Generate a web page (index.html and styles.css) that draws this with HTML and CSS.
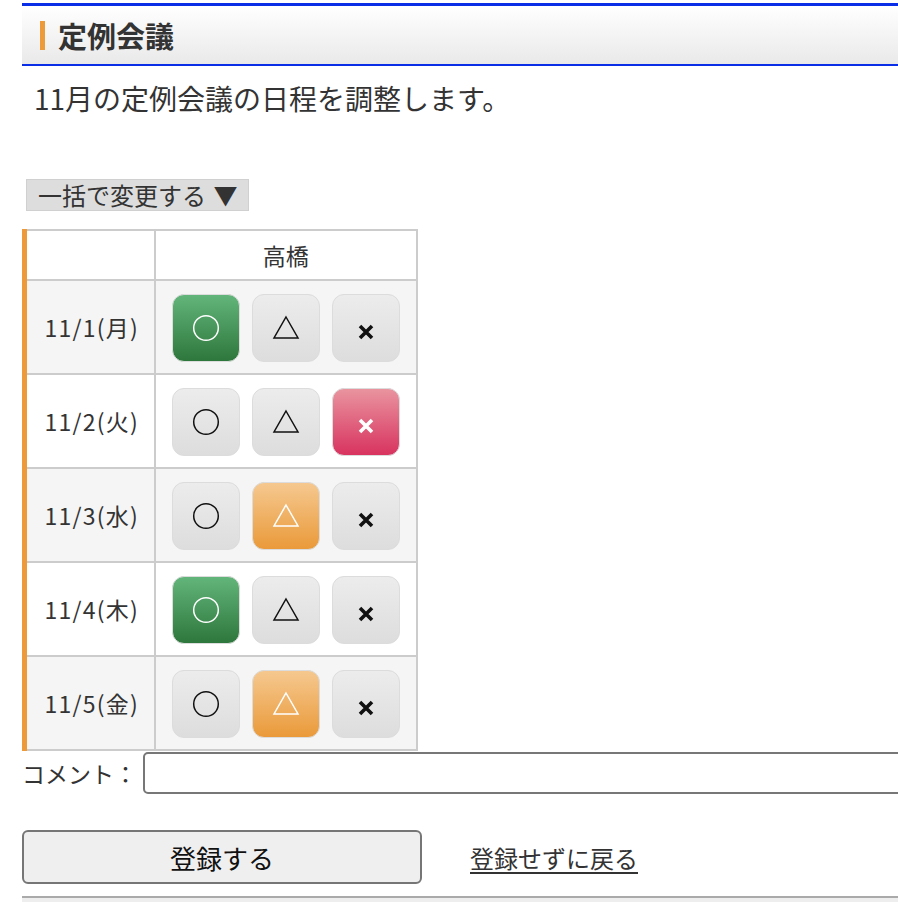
FILE: index.html
```html
<!DOCTYPE html>
<html lang="ja">
<head>
<meta charset="utf-8">
<title>定例会議</title>
<link rel="stylesheet" href="styles.css">
</head>
<body>
<div class="page">
  <h1 class="title"><span class="title-mark"></span>定例会議</h1>
  <p class="desc">11月の定例会議の日程を調整します。</p>
  <div class="bulk-row"><button class="bulk">一括で変更する <span class="caret">▼</span></button></div>
  <table class="sched">
    <colgroup><col class="col-date"><col class="col-name"></colgroup>
    <tr class="head">
      <th class="date"></th>
      <th class="name">高橋</th>
    </tr>
    <tr class="alt">
      <td class="date">11/1(月)</td>
      <td class="choices">
        <span class="opt on-ok"><svg viewBox="0 0 30 30"><circle cx="15" cy="15" r="12.3"/></svg></span><span class="opt"><svg viewBox="0 0 30 30"><path d="M15 4 L27 25 L3 25 Z"/></svg></span><span class="opt"><svg class="x" viewBox="0 0 30 30"><path d="M9 13 L21 25 M21 13 L9 25"/></svg></span>
      </td>
    </tr>
    <tr>
      <td class="date">11/2(火)</td>
      <td class="choices">
        <span class="opt"><svg viewBox="0 0 30 30"><circle cx="15" cy="15" r="12.3"/></svg></span><span class="opt"><svg viewBox="0 0 30 30"><path d="M15 4 L27 25 L3 25 Z"/></svg></span><span class="opt on-ng"><svg class="x" viewBox="0 0 30 30"><path d="M9 13 L21 25 M21 13 L9 25"/></svg></span>
      </td>
    </tr>
    <tr class="alt">
      <td class="date">11/3(水)</td>
      <td class="choices">
        <span class="opt"><svg viewBox="0 0 30 30"><circle cx="15" cy="15" r="12.3"/></svg></span><span class="opt on-maybe"><svg viewBox="0 0 30 30"><path d="M15 4 L27 25 L3 25 Z"/></svg></span><span class="opt"><svg class="x" viewBox="0 0 30 30"><path d="M9 13 L21 25 M21 13 L9 25"/></svg></span>
      </td>
    </tr>
    <tr>
      <td class="date">11/4(木)</td>
      <td class="choices">
        <span class="opt on-ok"><svg viewBox="0 0 30 30"><circle cx="15" cy="15" r="12.3"/></svg></span><span class="opt"><svg viewBox="0 0 30 30"><path d="M15 4 L27 25 L3 25 Z"/></svg></span><span class="opt"><svg class="x" viewBox="0 0 30 30"><path d="M9 13 L21 25 M21 13 L9 25"/></svg></span>
      </td>
    </tr>
    <tr class="alt">
      <td class="date">11/5(金)</td>
      <td class="choices">
        <span class="opt"><svg viewBox="0 0 30 30"><circle cx="15" cy="15" r="12.3"/></svg></span><span class="opt on-maybe"><svg viewBox="0 0 30 30"><path d="M15 4 L27 25 L3 25 Z"/></svg></span><span class="opt"><svg class="x" viewBox="0 0 30 30"><path d="M9 13 L21 25 M21 13 L9 25"/></svg></span>
      </td>
    </tr>
  </table>
  <div class="comment-row">
    <label class="comment-label" for="c">コメント：</label>
    <input class="comment-input" id="c" type="text">
  </div>
  <div class="actions">
    <button class="submit">登録する</button>
    <a class="back" href="#">登録せずに戻る</a>
  </div>
  <div class="footer-line"></div>
</div>
</body>
</html>
```

FILE: styles.css
```css
html, body {
  margin: 0;
  padding: 0;
  overflow: hidden;
  background: #fff;
}
body {
  font-family: "Noto Sans CJK JP", "Noto Sans", sans-serif;
  color: #333;
}
.page {
  padding: 3px 0 0 22px;
  width: 900px;
}
.title {
  margin: 0;
  height: 58px;
  border-top: 3px solid #0a2de6;
  border-bottom: 2px solid #0a2de6;
  background: linear-gradient(#ffffff, #e9e9e9);
  display: flex;
  align-items: center;
  font-size: 29px;
  font-weight: bold;
  color: #333;
  padding-left: 18px;
  line-height: 1;
}
.title-mark {
  display: inline-block;
  width: 5px;
  height: 29px;
  background: #ec9a3a;
  margin-right: 13px;
  margin-top: 1px;
}
.desc {
  margin: 0;
  padding: 13px 0 0 12px;
  font-size: 28px;
  line-height: 38px;
  height: 100px;
  color: #333;
}
.bulk-row {
  padding-left: 4px;
  height: 50px;
}
.bulk {
  font-family: inherit;
  font-size: 24px;
  line-height: 28px;
  height: 32px;
  padding: 0 11px 0 11px;
  background: #ddd;
  border: 1px solid #d0d0d0;
  color: #333;
  border-radius: 0;
  margin: 0;
}
.caret {
  margin-left: 2px;
}
.sched {
  border-collapse: collapse;
  border-left: 5px solid #ec9a3a;
  table-layout: fixed;
  width: 396px;
}
.col-date {
  width: 130px;
}
.sched th, .sched td {
  border: 2px solid #ccc;
  padding: 0;
  font-weight: normal;
  color: #333;
}
.sched tr td:first-child, .sched tr th:first-child {
  border-left: none;
}
.head th {
  height: 48px;
  font-size: 23px;
  background: #fff;
}
.date {
  font-size: 23px;
  letter-spacing: 1.2px;
  text-align: center;
  white-space: nowrap;
  padding-left: 3px !important;
}
.sched td {
  height: 92px;
}
.alt td {
  background: #f5f5f5;
}
.choices {
  padding: 0 0 0 16px !important;
  white-space: nowrap;
  font-size: 0;
}
.opt {
  display: inline-flex;
  align-items: center;
  justify-content: center;
  width: 66px;
  height: 66px;
  border: 1px solid #dcdcdc;
  border-radius: 12px;
  background: linear-gradient(#ececec, #dddddd);
  vertical-align: middle;
  margin-right: 12px;
  margin-top: 1px;
}
.opt:last-child {
  margin-right: 0;
}
.opt svg {
  width: 30px;
  height: 30px;
  fill: none;
  stroke: #111;
  stroke-width: 1.5;
}
.opt svg.x {
  stroke-width: 3.6;
}
.on-ok {
  background: linear-gradient(#62b57a, #2e773c);
}
.on-ng {
  background: linear-gradient(#e9949f, #d8335f);
}
.on-maybe {
  background: linear-gradient(#f5c88f, #ea9a3a);
}
.on-ok svg, .on-ng svg, .on-maybe svg {
  stroke: #fff;
}
.comment-row {
  display: flex;
  align-items: center;
  height: 42px;
  margin-top: 1px;
}
.comment-label {
  font-size: 23px;
  color: #333;
  width: 121px;
}
.comment-input {
  flex: 1;
  height: 42px;
  box-sizing: border-box;
  border: 2px solid #777;
  border-radius: 5px;
  margin: 0;
  font-size: 20px;
}
.actions {
  display: flex;
  align-items: center;
  margin-top: 36px;
  height: 54px;
}
.submit {
  width: 400px;
  height: 54px;
  box-sizing: border-box;
  border: 2px solid #767676;
  border-radius: 6px;
  background: #efefef;
  font-family: inherit;
  font-size: 26px;
  color: #111;
  margin: 0;
  padding: 0;
}
.back {
  margin-left: 48px;
  font-size: 24px;
  color: #333;
  text-decoration: underline;
  text-underline-offset: 4px;
}
.footer-line {
  margin-top: 12px;
  border-top: 2px solid #aaa;
  height: 40px;
  background: #eee;
}
```
